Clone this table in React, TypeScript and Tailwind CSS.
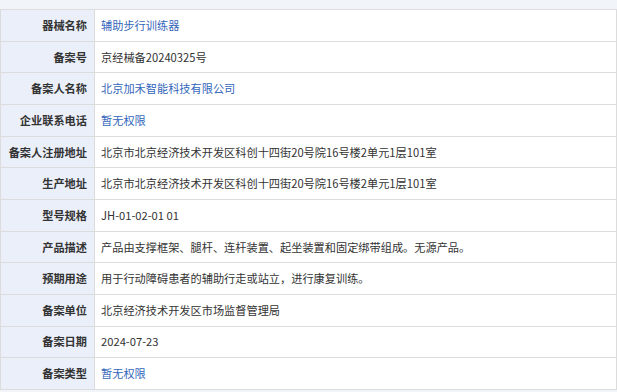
const rows: { label: string; value: string; link?: boolean }[] = [
  { label: "器械名称", value: "辅助步行训练器", link: true },
  { label: "备案号", value: "京经械备20240325号" },
  { label: "备案人名称", value: "北京加禾智能科技有限公司", link: true },
  { label: "企业联系电话", value: "暂无权限", link: true },
  { label: "备案人注册地址", value: "北京市北京经济技术开发区科创十四街20号院16号楼2单元1层101室" },
  { label: "生产地址", value: "北京市北京经济技术开发区科创十四街20号院16号楼2单元1层101室" },
  { label: "型号规格", value: "JH-01-02-01 01" },
  { label: "产品描述", value: "产品由支撑框架、腿杆、连杆装置、起坐装置和固定绑带组成。无源产品。" },
  { label: "预期用途", value: "用于行动障碍患者的辅助行走或站立，进行康复训练。" },
  { label: "备案单位", value: "北京经济技术开发区市场监督管理局" },
  { label: "备案日期", value: "2024-07-23" },
  { label: "备案类型", value: "暂无权限", link: true },
];

export default function App() {
  return (
    <div
      className="w-[617px] h-[392px] bg-[#f1f4f8] overflow-hidden text-[11.2px] text-[#333]"
      style={{ fontFamily: '"Noto Sans CJK SC", "Noto Sans", sans-serif' }}
    >
      <div className="h-[9px]" />
      {/* detail table */}
      <div className="bg-white border-t border-l border-r border-[#dcdcdc]">
        {rows.map((r) => (
          <div key={r.label} className="flex h-[31.67px] border-b border-[#dcdcdc]">
            <div className="w-[94px] shrink-0 bg-[#eaeff9] border-r border-[#dcdcdc] flex items-center justify-end pr-[7px] font-bold">
              {r.label}
            </div>
            <div className={`flex items-center pl-[6px] ${r.link ? "text-[#3366bb]" : ""}`}>
              {r.value}
            </div>
          </div>
        ))}
      </div>
    </div>
  );
}
